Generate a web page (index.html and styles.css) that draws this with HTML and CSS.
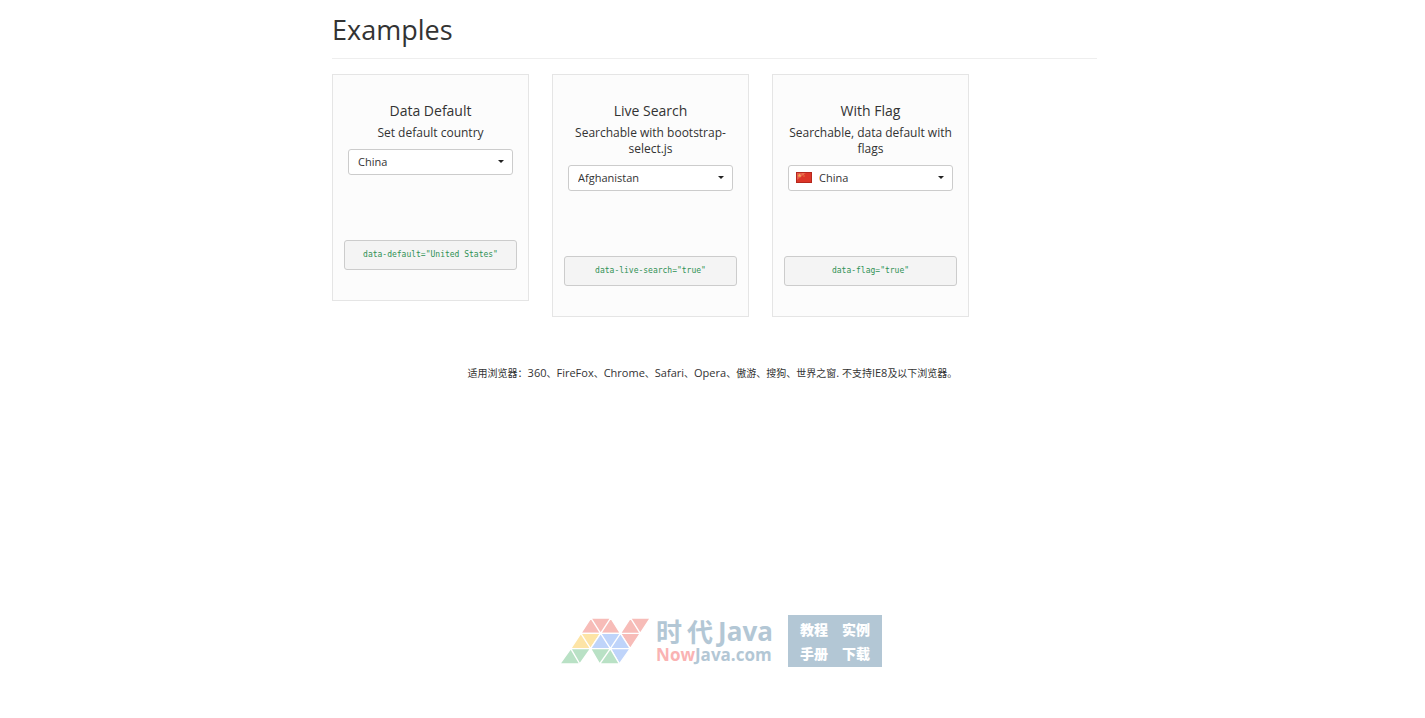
FILE: index.html
```
<!DOCTYPE html>
<html lang="en">
<head>
  <meta charset="UTF-8">
  <meta name="viewport" content="width=device-width, initial-scale=1.0">
  <title>Country Picker Examples</title>
  <link rel="stylesheet" href="styles.css">
</head>
<body>
  <div class="container">
    <h1>Examples</h1>

    <div class="examples">
      <div class="example">
        <h3>Data Default</h3>
        <label for="country-default">Set default country</label>
        <div class="picker">
          <select id="country-default">
            <option>Afghanistan</option>
            <option selected>China</option>
            <option>United States</option>
          </select>
        </div>
        <pre><code>data-default="United States"</code></pre>
      </div>

      <div class="example">
        <h3>Live Search</h3>
        <label for="country-search">Searchable with bootstrap-select.js</label>
        <div class="picker">
          <select id="country-search">
            <option selected>Afghanistan</option>
            <option>China</option>
            <option>United States</option>
          </select>
        </div>
        <pre><code>data-live-search="true"</code></pre>
      </div>

      <div class="example">
        <h3>With Flag</h3>
        <label for="country-flag">Searchable, data default with flags</label>
        <div class="picker with-flag">
          <svg class="flag" viewBox="0 0 16 11" aria-hidden="true">
            <rect width="16" height="11" fill="#b5271d"/>
            <rect x="1" y="1" width="14" height="9" fill="#dc3528"/>
            <path d="M1 1h9L1 8z" fill="#e65a4b"/>
            <path d="M3.500 1.500l.6 1.300 1.400.1-1.100.9.400 1.400-1.300-.8-1.200.8.400-1.400-1.100-.9 1.400-.1z" fill="#f5b052"/>
            <path d="M6.500 1.500h1v1h-1zM7.500 3.500h1v1h-1z" fill="#f3a84a"/>
          </svg>
          <select id="country-flag">
            <option>Afghanistan</option>
            <option selected>China</option>
            <option>United States</option>
          </select>
        </div>
        <pre><code>data-flag="true"</code></pre>
      </div>
    </div>
  </div>

  <p class="browsers" lang="zh">适用浏览器：<span>360</span>、<span>FireFox</span>、<span>Chrome</span>、<span>Safari</span>、<span>Opera</span>、傲游、搜狗、世界之窗<span>. </span>不支持<span>IE8</span>及以下浏览器。</p>

  <footer class="brand" lang="zh">
    <svg class="logo" viewBox="0 0 274 140" aria-hidden="true">
      <g fill="#f7bcb8">
        <path d="M95 0L65 46H124zM95 0H154L124 46zM154 0L124 46H183zM213 0L183 46H242zM213 0H272L242 46zM183 46H242L212 91z"/>
      </g>
      <g fill="#fde4a6">
        <path d="M65 46L35 91H94zM65 46H124L94 91z"/>
      </g>
      <g fill="#bfd4fa">
        <path d="M124 46L94 91H153zM124 46H183L153 91zM183 46L153 91H212zM153 91H212L180 137z"/>
      </g>
      <g fill="#b9e1c5">
        <path d="M35 91L2 137H62zM35 91H94L62 137zM94 91H153L121 137zM153 91L121 137H180z"/>
      </g>
    </svg>
    <div class="name">
      <div class="name-main"><span class="name-zh">时</span><span class="name-zh">代</span><span>Java</span></div>
      <div class="name-site"><span class="now">Now</span>Java.com</div>
    </div>
    <div class="topics">
      <span>教程</span>
      <span>实例</span>
      <span>手册</span>
      <span>下载</span>
    </div>
  </footer>
</body>
</html>
```
FILE: styles.css
```
* {
  box-sizing: border-box;
}
body {
  margin: 0;
  background: #fff;
  color: #333;
  font-family: "Open Sans", "Noto Sans CJK SC", sans-serif;
  font-size: 11px;
}
.container {
  max-width: 769px;
  margin: 0 auto;
  padding-left: 4px;
}
h1 {
  margin: 0 0 15px;
  padding: 14px 0 12px;
  border-bottom: 1px solid #eee;
  font-size: 27px;
  font-weight: 400;
  line-height: 32px;
}
.examples {
  display: flex;
  flex-wrap: wrap;
  align-items: flex-start;
  gap: 23px;
}
.example {
  width: 197px;
  padding: 27px 11px 30px;
  background: #fcfcfc;
  border: 1px solid #e5e5e5;
  text-align: center;
}
.example h3 {
  margin: 0 0 5px;
  font-size: 14px;
  font-weight: 400;
  line-height: 18px;
}
.example label {
  display: block;
  font-size: 12px;
  line-height: 16px;
}
.picker {
  position: relative;
  margin: 8px 4px 65px;
}
.picker::after {
  content: "";
  position: absolute;
  top: 11px;
  right: 9px;
  border: 3px solid transparent;
  border-top-color: #222;
  border-bottom: 0;
  pointer-events: none;
}
.picker select {
  display: block;
  width: 100%;
  height: 26px;
  padding: 0 9px 2px;
  appearance: none;
  background: #fff;
  border: 1px solid #ccc;
  border-radius: 3px;
  color: #333;
  font-family: inherit;
  font-size: 11px;
}
.picker.with-flag select {
  padding-left: 30px;
}
.flag {
  position: absolute;
  top: 7px;
  left: 8px;
  width: 16px;
  height: 11px;
}
pre {
  margin: 0;
  padding: 8px;
  background: #f4f4f4;
  border: 1px solid #ccc;
  border-radius: 3px;
  color: #2f9154;
  font-size: 8px;
  line-height: 12px;
}
code {
  font-family: "DejaVu Sans Mono", monospace;
  font-size: 8px;
}
.browsers {
  margin: 48px 0 0;
  font-size: 10px;
  text-align: center;
  line-height: 16px;
}
.browsers span {
  font-size: 11px;
}
.brand {
  display: flex;
  justify-content: center;
  align-items: center;
  margin: 234px 0 40px;
  padding-left: 16px;
  color: #b3c7d5;
  font-weight: 700;
}
.logo {
  width: 92px;
  height: 47px;
  stroke: #fff;
  stroke-width: 4;
}
.name {
  margin: 0 15px 0 5px;
}
.name-main {
  display: flex;
  align-items: center;
  gap: 5px;
  font-size: 26px;
  line-height: 28px;
}
.name-zh {
  font-family: "Noto Sans CJK SC", sans-serif;
}
.name-site {
  font-size: 17px;
  line-height: 20px;
}
.now {
  color: #fab3b3;
}
.topics {
  display: grid;
  grid-template-columns: auto auto;
  align-content: center;
  gap: 4px 14px;
  height: 52px;
  padding: 0 12px;
  background: #b3c7d5;
  color: #fff;
  font-family: "Noto Sans CJK SC", sans-serif;
  font-size: 14px;
  font-weight: 900;
  line-height: 20px;
}
```
